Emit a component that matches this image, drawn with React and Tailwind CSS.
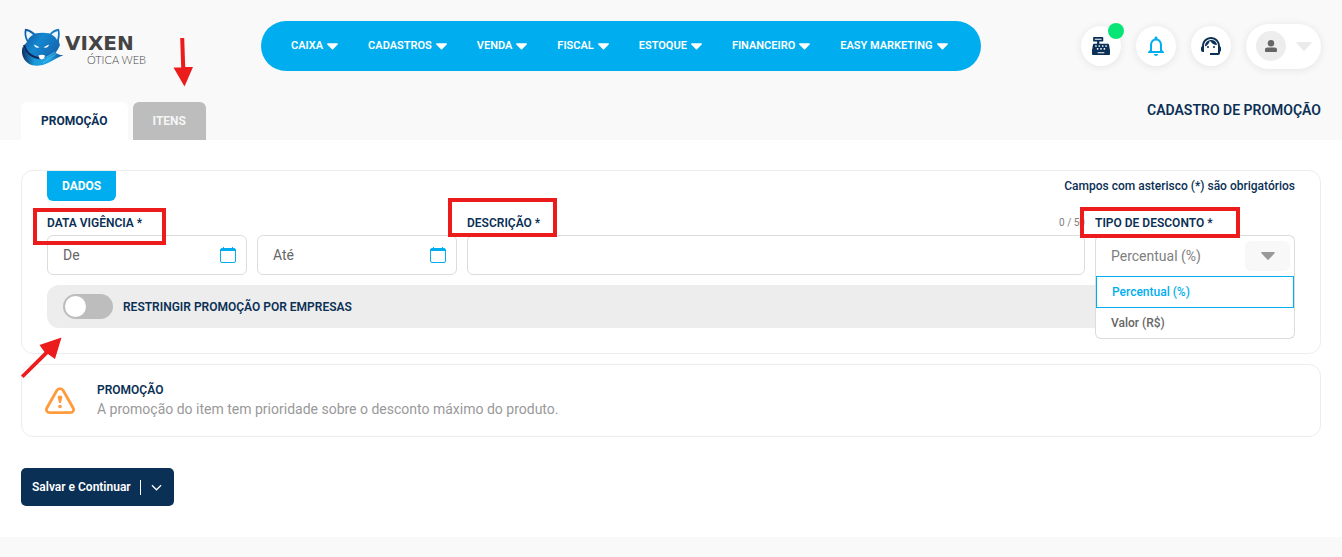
import { useState } from 'react';
import { FaCashRegister } from 'react-icons/fa';
import { MdNotificationsNone, MdSupportAgent } from 'react-icons/md';

const menus = ['CAIXA', 'CADASTROS', 'VENDA', 'FISCAL', 'ESTOQUE', 'FINANCEIRO', 'EASY MARKETING'];
const discountTypes = ['Percentual (%)', 'Valor (R$)'];

function Caret({ className }) {
    return (
        <svg viewBox="0 0 12 7" className={className} fill="currentColor" aria-hidden="true">
            <path d="M.8 0h10.4c.7 0 1 .7.5 1.200L6.600 6.600c-.3.3-.9.3-1.200 0L.3 1.200C-.2.7.1 0 .8 0z" />
        </svg>
    );
}

function Logo() {
    return (
        <a href="#" className="flex w-60 items-start pt-1 text-[#444]">
            <svg viewBox="0 0 44 40" className="h-10 w-11 shrink-0" aria-hidden="true">
                <defs>
                    <linearGradient id="fur" x1="0" y1="0" x2="1" y2=".6">
                        <stop offset="0" stopColor="#0f4c8f" />
                        <stop offset=".5" stopColor="#1587d0" />
                        <stop offset="1" stopColor="#1565b0" />
                    </linearGradient>
                    <linearGradient id="tail" x1="0" y1="0" x2="1" y2="0">
                        <stop offset="0" stopColor="#0f2d63" />
                        <stop offset=".3" stopColor="#1a9ad9" />
                        <stop offset=".65" stopColor="#1fa5e3" />
                        <stop offset="1" stopColor="#134a92" />
                    </linearGradient>
                </defs>
                <path d="M4 .8C3 5 3.500 10 6 14c-3 3-5 6-5 10 1 4 4 7 9 8l11 1 9-4c3-2 6-5 9-12-1-2-1-4-1-5 1-4 1-8 0-11.200-4 .5-7 2.200-9 4.700-5-1-10-1-15 0C11 3 8 1 4 .8z" fill="url(#fur)" />
                <path d="M5.500 3c-.8 3 0 6 1.500 9 1-2.500 3-4 5-5-2-2-4-3.500-6.500-4zM36.800 3c-3 .8-5 2-6.300 3.800 3 1.200 4.500 3 5.500 5.200 1-3 1.300-6 .8-9z" fill="#eaf5fc" />
                <path d="M2 18c-1.500 4-1.500 9 1 13 3 5 9 7.500 15 6.500C29 36.500 33 30 42.500 27.500 38 27 36 26 34 24c-4 3-8 5-13 8-8-1-16-5-19-14z" fill="url(#tail)" />
                <path d="M3 17c2 7 7 12 15 13" stroke="#0d2858" strokeWidth="2" fill="none" />
                <path d="M34 24c-4 3-8 4-11 7M36 25c-4 4-9 5-14 10" stroke="#5ac3ef" strokeWidth=".7" fill="none" />
                <path d="M13 16.500l5.500 2.800c-2 1-5 .2-5.500-2.800zM28 16.500l-5.500 2.800c2 1 5 .2 5.500-2.800z" fill="#fff" />
                <path d="M17.500 27.500c2-1 4.500-1 6.500 0-.3 2-1.500 4-3.200 4s-3-2-3.300-4z" fill="#fff" />
            </svg>
            <span className="flex flex-col pt-1">
                <span className="font-['DejaVu_Sans'] text-[20px] font-bold leading-[22px]">VIXEN</span>
                <span className="pl-[22px] font-[Lato] text-[11px] font-light leading-3">ÓTICA WEB</span>
            </span>
        </a>
    );
}

function RoundButton({ label, children }) {
    return (
        <button aria-label={label} className="relative flex size-10 items-center justify-center rounded-full bg-white text-[#0b3055] shadow-[0_1px_8px_rgba(0,0,0,0.09)]">
            {children}
        </button>
    );
}

function Header() {
    return (
        <header className="bg-[#f9f9f9] px-[21px] pt-[21px]">
            <div className="flex h-[50px] items-center">
                <Logo />
                <nav className="flex h-full w-[720px] items-center gap-[30px] rounded-full bg-[#00aeef] pl-[30px]">
                    {menus.map((menu) => (
                        <button key={menu} className="flex items-center gap-1 whitespace-nowrap text-[11px] font-semibold leading-4 text-white">
                            {menu}
                            <Caret className="h-[7px] w-[11px]" />
                        </button>
                    ))}
                </nav>
                <div className="ml-auto flex items-center gap-[15px]">
                    <RoundButton label="Caixa">
                        <FaCashRegister className="size-[18px]" />
                        <span className="absolute -right-[3px] -top-[3px] size-4 rounded-full bg-[#08e577]" />
                    </RoundButton>
                    <RoundButton label="Notificações">
                        <MdNotificationsNone className="size-6 text-[#00aeef]" />
                    </RoundButton>
                    <RoundButton label="Suporte">
                        <MdSupportAgent className="size-6" />
                    </RoundButton>
                    <button aria-label="Usuário" className="flex h-[45px] w-[75px] items-center gap-[10px] rounded-full bg-white pl-[10px] text-[#ebebeb] shadow-[0_1px_8px_rgba(0,0,0,0.09)]">
                        <span className="flex size-[30px] items-center justify-center rounded-full bg-[#ededed] text-[#666]">
                            <svg viewBox="0 0 12 12" className="size-3" fill="currentColor" aria-hidden="true">
                                <circle cx="6" cy="3.200" r="3.200" />
                                <path d="M0 10c0-1.800 1-2.500 2.500-2.500h7C11 7.500 12 8.200 12 10v1c0 .6-.4 1-1 1H1c-.6 0-1-.4-1-1z" />
                            </svg>
                        </span>
                        <Caret className="h-[9px] w-4" />
                    </button>
                </div>
            </div>

            <div className="mt-[31px] flex items-start justify-between">
                <div role="tablist" className="flex gap-[5px] text-[12px] font-bold">
                    <button role="tab" aria-selected="true" className="h-[38px] rounded-t-md bg-white px-5 text-[#0b3055]">
                        PROMOÇÃO
                    </button>
                    <button role="tab" aria-selected="false" className="relative h-[38px] rounded-t-md bg-[#bdbdbd] px-5 text-[#f5f5f5]">
                        ITENS
                        <svg viewBox="0 0 20 50" className="absolute -top-[64px] left-10 h-[50px] w-5" aria-hidden="true">
                            <path d="M7.200 0h4l1 29H20L11.500 48.500.5 29.500h7.700z" fill="#ec1c1c" />
                        </svg>
                    </button>
                </div>
                <h1 className="text-[14px] font-semibold leading-4 text-[#0b3055]">CADASTRO DE PROMOÇÃO</h1>
            </div>
        </header>
    );
}

function DateField({ id, placeholder }) {
    return (
        <div className="flex h-10 w-[200px] items-center rounded-md border border-[#dcdcdc] bg-white pl-[15px] pr-[10px]">
            <input id={id} aria-label={placeholder} placeholder={placeholder} className="min-w-0 flex-1 text-[14px] text-[#666] outline-none placeholder:text-[#666]" />
            <svg viewBox="0 0 16 16" className="size-4" fill="none" stroke="#00aeef" aria-hidden="true">
                <rect x=".5" y="1.500" width="15" height="14" rx="1.500" />
                <path d="M.5 2.500h15M1 3.500h14M3.500 0v3M12.500 0v3" />
            </svg>
        </div>
    );
}

function DiscountSelect() {
    const [selected, setSelected] = useState(discountTypes[0]);

    return (
        <div className="relative w-[200px]">
            <div className="relative mb-1 w-fit">
                <label htmlFor="tipo" className="block">TIPO DE DESCONTO *</label>
                <Highlight className="-left-[15px] -top-2 h-[31px] w-40" />
            </div>
            <div className="relative flex h-10 items-center rounded-t-md border border-b-0 border-[#dcdcdc] bg-white">
                <select
                    id="tipo"
                    value={selected}
                    onChange={(e) => setSelected(e.target.value)}
                    className="h-full w-full appearance-none pl-[15px] text-[14px] font-normal text-[#808080] outline-none"
                >
                    {discountTypes.map((type) => (
                        <option key={type}>{type}</option>
                    ))}
                </select>
                <span className="pointer-events-none absolute right-1 flex h-[30px] w-[45px] items-center justify-center rounded-md bg-[#f8f8f8] text-[#999]">
                    <Caret className="h-2 w-[14px]" />
                </span>
            </div>
            <ul className="absolute inset-x-0 top-full z-10 rounded-b-md border border-t-0 border-[#dcdcdc] bg-white pt-px font-medium text-[#666]">
                {discountTypes.map((type) => (
                    <li key={type}>
                        <button
                            onClick={() => setSelected(type)}
                            className={
                                type === selected
                                    ? 'block h-8 w-full border border-[#00aeef] px-[15px] text-left text-[#00aeef]'
                                    : 'block h-[30px] w-full px-[15px] text-left'
                            }
                        >
                            {type}
                        </button>
                    </li>
                ))}
            </ul>
        </div>
    );
}

function Highlight({ className }) {
    return <span className={`pointer-events-none absolute z-20 border-4 border-[#ec1c1c] ${className}`} />;
}

export default function App() {
    return (
        <div className="bg-[#f9f9f9] pb-5 font-[Roboto,sans-serif] text-[12px] leading-4 text-[#0b3055]">
            <Header />
            <main className="bg-white px-[21px] pb-[31px] pt-[30px]">
                <section className="rounded-xl border border-[#ededed] px-[25px] pb-[25px]">
                    <div className="flex items-start justify-between">
                        <h2 className="flex h-[30px] items-center rounded-b-md bg-[#00aeef] px-[15px] font-bold text-white">DADOS</h2>
                        <p className="mt-[7px] font-medium">Campos com asterisco (*) são obrigatórios</p>
                    </div>

                    <div className="mt-[14px] flex gap-[10px] font-semibold">
                        <div>
                            <div className="relative mb-1 w-fit">
                                <label htmlFor="de" className="block">DATA VIGÊNCIA *</label>
                                <Highlight className="-left-[14px] -top-[7px] h-[37px] w-[133px]" />
                            </div>
                            <div className="flex gap-[10px] font-normal">
                                <DateField id="de" placeholder="De" />
                                <DateField id="ate" placeholder="Até" />
                            </div>
                        </div>
                        <div className="flex-1">
                            <div className="mb-1 flex justify-between">
                                <div className="relative">
                                    <label htmlFor="descricao" className="block">DESCRIÇÃO *</label>
                                    <Highlight className="-left-[19px] -top-[17px] h-[39px] w-[109px]" />
                                </div>
                                <span className="text-[10px] font-normal text-[#808080]">0 / 50</span>
                            </div>
                            <input id="descricao" maxLength={50} className="block h-10 w-full rounded-md border border-[#dcdcdc] px-[15px] text-[14px] outline-none" />
                        </div>
                        <DiscountSelect />
                    </div>

                    <div className="relative mt-[10px] rounded-xl bg-[#ededed] px-4 py-[9px]">
                        <label className="flex w-fit items-center gap-[10px] font-semibold">
                            <input
                                type="checkbox"
                                className="h-[25px] w-[50px] appearance-none rounded-full bg-[#bdbdbd] p-[2px] before:block before:size-[21px] before:rounded-full before:bg-white checked:bg-[#00aeef] checked:before:ml-auto"
                            />
                            RESTRINGIR PROMOÇÃO POR EMPRESAS
                        </label>
                        <svg viewBox="0 0 42 42" className="pointer-events-none absolute -left-[26px] top-[51px] z-20 size-[42px]" aria-hidden="true">
                            <path d="M0 39.500L23.500 16 18.500 9 40.500 1.500 34 23l-7-5L2.500 42z" fill="#ec1c1c" />
                        </svg>
                    </div>
                </section>

                <section className="mt-[10px] flex h-[73px] items-center gap-[22px] rounded-xl border border-[#ededed] px-[23px]">
                    <svg viewBox="0 0 30 28" className="h-7 w-[30px]" fill="none" aria-hidden="true">
                        <path d="M11.800 3.500c1.400-2.500 5-2.500 6.400 0l9.800 17.200c1.400 2.500 0 5-3 5H5c-3 0-4.400-2.500-3-5z" stroke="#ff9a3d" strokeWidth="2.800" />
                        <path d="M15 8.500c-1.700 0-2.700 1.100-2.200 2.500l1.200 4.400c.3 1.100 1.700 1.100 2 0l1.200-4.400c.5-1.400-.5-2.500-2.200-2.500z" fill="#ff9a3d" />
                        <circle cx="15" cy="19.500" r="1.800" fill="#ff9a3d" />
                    </svg>
                    <div>
                        <h3 className="font-semibold">PROMOÇÃO</h3>
                        <p className="text-[14px] leading-[22px] text-[#999]">A promoção do item tem prioridade sobre o desconto máximo do produto.</p>
                    </div>
                </section>

                <div className="mt-[31px] flex h-[38px] w-fit items-center rounded-[5px] bg-[#0b3055] font-semibold text-white">
                    <button className="h-full pl-[11px] pr-[9px]">Salvar e Continuar</button>
                    <span className="h-[15px] w-px bg-white" />
                    <button aria-label="Mais opções" className="h-full pl-[10px] pr-3">
                        <svg viewBox="0 0 12 7" className="h-[7px] w-[11px]" fill="none" stroke="currentColor" strokeWidth="1.300" aria-hidden="true">
                            <path d="M1 1l5 5 5-5" />
                        </svg>
                    </button>
                </div>
            </main>
        </div>
    );
}
